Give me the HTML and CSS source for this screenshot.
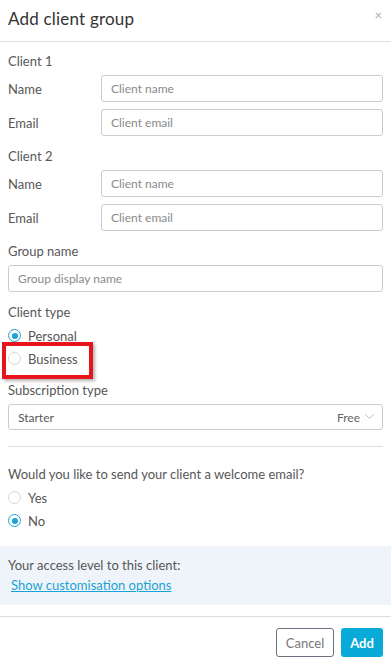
FILE: index.html
```html
<!DOCTYPE html>
<html lang="en">
<head>
  <meta charset="UTF-8">
  <meta name="viewport" content="width=device-width, initial-scale=1.0">
  <title>Add client group</title>
  <link rel="stylesheet" href="styles.css">
</head>
<body>
  <div class="modal">
    <div class="modal-header">
      <h1 class="modal-title">Add client group</h1>
      <span class="close">&times;</span>
    </div>

    <div class="modal-body">
      <div class="group">
        <div class="group-title">Client 1</div>
        <div class="field-row">
          <label class="field-label">Name</label>
          <input class="input" type="text" placeholder="Client name">
        </div>
        <div class="field-row">
          <label class="field-label">Email</label>
          <input class="input" type="text" placeholder="Client email">
        </div>
      </div>

      <div class="group">
        <div class="group-title">Client 2</div>
        <div class="field-row">
          <label class="field-label">Name</label>
          <input class="input" type="text" placeholder="Client name">
        </div>
        <div class="field-row">
          <label class="field-label">Email</label>
          <input class="input" type="text" placeholder="Client email">
        </div>
      </div>

      <div class="group">
        <div class="group-title">Group name</div>
        <input class="input full" type="text" placeholder="Group display name">
      </div>

      <div class="group radio-group">
        <div class="group-title">Client type</div>
        <div class="radio-row">
          <span class="radio checked"></span>
          <span>Personal</span>
        </div>
        <div class="radio-row">
          <span class="radio"></span>
          <span>Business</span>
          <span class="highlight-box"></span>
        </div>
      </div>

      <div class="group tight">
        <div class="group-title">Subscription type</div>
        <div class="select">
          <span>Starter</span>
          <span class="select-right">
            Free
            <svg class="chevron" width="9" height="6" viewBox="0 0 9 6"><path d="M0.5 0.5 L4.5 4.5 L8.5 0.5" fill="none" stroke="#bbb" stroke-width="1"/></svg>
          </span>
        </div>
      </div>

      <hr class="divider">

      <div class="group radio-group last">
        <div class="group-title">Would you like to send your client a welcome email?</div>
        <div class="radio-row">
          <span class="radio"></span>
          <span>Yes</span>
        </div>
        <div class="radio-row">
          <span class="radio checked"></span>
          <span>No</span>
        </div>
      </div>
    </div>

    <div class="access-panel">
      <div class="access-text">Your access level to this client:</div>
      <a class="access-link" href="#">Show customisation options</a>
    </div>

    <div class="modal-footer">
      <button class="btn btn-cancel">Cancel</button>
      <button class="btn btn-add">Add</button>
    </div>
  </div>
</body>
</html>
```

FILE: styles.css
```css
body {
  margin: 0;
  font-family: Lato, "Open Sans", sans-serif;
  font-size: 13px;
  color: #575757;
  background-color: #fff;
}
.modal {
  width: 391px;
}
.modal-header {
  height: 42px;
  border-bottom: 1px solid #e0e0e0;
  display: flex;
  align-items: center;
  justify-content: space-between;
  padding: 0 9px 4px 8px;
  box-sizing: border-box;
}
.modal-title {
  margin: 0;
  font-size: 17px;
  font-weight: normal;
  color: #333;
  letter-spacing: 0.2px;
}
.close {
  color: #aaa;
  font-size: 13px;
  margin-top: -7px;
}
.modal-body {
  padding: 10px 8px 14px;
}
.group {
  margin-bottom: 11px;
}
.group.tight {
  margin-bottom: 16px;
}
.group.last {
  margin-bottom: 0;
}
.group-title {
  line-height: 18px;
  margin-bottom: 5px;
}
.radio-group .group-title {
  margin-bottom: 3px;
}
.field-row {
  display: flex;
  align-items: center;
  margin-bottom: 7px;
}
.field-label {
  width: 93px;
}
.input {
  flex: 1;
  height: 27px;
  border: 1px solid #ccc;
  border-radius: 3px;
  padding: 0 9px;
  font-family: inherit;
  font-size: 12px;
  color: #555;
  box-sizing: border-box;
  outline: none;
}
.input::placeholder {
  color: #8a8a8a;
}
.input.full {
  width: 100%;
  display: block;
}
.radio-row {
  display: flex;
  align-items: center;
  gap: 7px;
  height: 23px;
  position: relative;
}
.radio {
  width: 11px;
  height: 11px;
  border: 1px solid #d6d6d6;
  border-radius: 50%;
  box-sizing: content-box;
  position: relative;
}
.radio.checked {
  border-color: #1aa3d4;
}
.radio.checked::after {
  content: "";
  position: absolute;
  left: 2.5px;
  top: 2.5px;
  width: 6px;
  height: 6px;
  border-radius: 50%;
  background-color: #1aa3d4;
}
.highlight-box {
  position: absolute;
  left: -6px;
  top: -5px;
  width: 91px;
  height: 37px;
  border: 4px solid #e8141b;
  box-sizing: border-box;
  box-shadow: 2px 2px 3px rgba(0, 0, 0, 0.3);
}
.select {
  height: 26px;
  border: 1px solid #ccc;
  border-radius: 3px;
  display: flex;
  align-items: center;
  justify-content: space-between;
  padding: 0 8px 0 9px;
  font-size: 12px;
  box-sizing: border-box;
}
.select-right {
  display: flex;
  align-items: center;
  gap: 5px;
  color: #666;
}
.divider {
  border: none;
  border-top: 1px solid #ddd;
  margin: 0 0 18px;
}
.access-panel {
  background-color: #eff4fb;
  padding: 10px 8px 11px;
}
.access-text {
  line-height: 18px;
  margin-bottom: 2px;
}
.access-link {
  display: inline-block;
  color: #1aa3d4;
  margin-left: 3px;
  line-height: 18px;
}
.modal-footer {
  border-top: 1px solid #ddd;
  margin-top: 11px;
  padding: 11px 8px 4px;
  display: flex;
  justify-content: flex-end;
  gap: 7px;
}
.btn {
  height: 29px;
  border-radius: 3px;
  font-family: inherit;
  font-size: 13px;
  padding: 0 8px;
  cursor: pointer;
}
.btn-cancel {
  background-color: #fff;
  border: 1px solid #6b7380;
  color: #777;
  width: 58px;
}
.btn-add {
  background-color: #09aad8;
  border: none;
  color: #fff;
  font-weight: bold;
  width: 42px;
}
```
